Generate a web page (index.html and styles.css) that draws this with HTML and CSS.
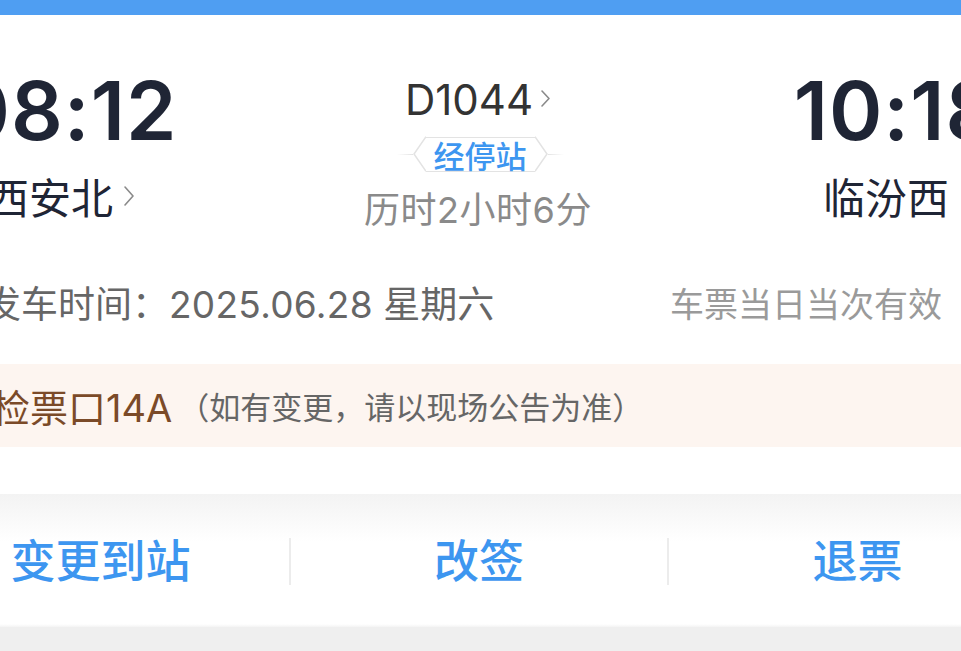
FILE: index.html
```html
<!DOCTYPE html>
<html lang="zh-CN">
<head>
<meta charset="utf-8">
<title>车票详情</title>
<link rel="stylesheet" href="styles.css">
</head>
<body>
<div class="topbar"></div>
<main class="card">
  <section class="route">
    <div class="end end-from">
      <div class="time">08:12</div>
      <div class="station">西安北<svg class="chev" width="12" height="22" viewBox="0 0 12 22"><polyline points="2,2 10,11 2,20" fill="none" stroke="#8a8a8a" stroke-width="1.6" stroke-linecap="round" stroke-linejoin="round"/></svg></div>
    </div>
    <div class="mid">
      <div class="train">D1044<svg class="chev" width="11" height="19" viewBox="0 0 11 19"><polyline points="2,2 9,9.5 2,17" fill="none" stroke="#8a8a8a" stroke-width="1.6" stroke-linecap="round" stroke-linejoin="round"/></svg></div>
      <div class="badge">
        <span class="badge-line left"></span>
        <svg class="badge-tip" width="13" height="36" viewBox="0 0 13 36"><polyline points="13,0.75 1,18 13,35.25" fill="#fff" stroke="#e3e3e3" stroke-width="1.5"/></svg>
        <span class="badge-text">经停站</span>
        <svg class="badge-tip" width="13" height="36" viewBox="0 0 13 36"><polyline points="0,0.75 12,18 0,35.25" fill="#fff" stroke="#e3e3e3" stroke-width="1.5"/></svg>
        <span class="badge-line right"></span>
      </div>
      <div class="duration">历时2小时6分</div>
    </div>
    <div class="end end-to">
      <div class="time">10:18</div>
      <div class="station">临汾西</div>
    </div>
  </section>

  <section class="info">
    <div class="depart">发车时间：<span class="num">2025.06.28</span> 星期六</div>
    <div class="valid">车票当日当次有效</div>
  </section>

  <section class="gate">
    <span class="gate-no">检票口14A</span><span class="gate-note">（如有变更，请以现场公告为准）</span>
  </section>

  <nav class="actions">
    <div class="action">变更到站</div>
    <div class="sep"></div>
    <div class="action">改签</div>
    <div class="sep"></div>
    <div class="action">退票</div>
  </nav>
</main>
<div class="footer"></div>
</body>
</html>
```

FILE: styles.css
```css
html, body {
  margin: 0;
  padding: 0;
  overflow: hidden;
  background: #ffffff;
}
body {
  width: 961px;
  height: 651px;
  font-family: Inter, "Noto Sans CJK SC", sans-serif;
  color: #1f2535;
}
.topbar {
  height: 15px;
  background: #4f9ef2;
}
.card {
  background: #fff;
}
.route {
  display: grid;
  grid-template-columns: 400px 436px 380px;
  margin-left: -140px;
  width: 1216px;
  align-items: start;
}
.end {
  display: flex;
  flex-direction: column;
  align-items: center;
}
.time {
  margin-top: 56px;
  font-size: 81px;
  line-height: 80px;
  font-weight: 600;
  letter-spacing: 1px;
  color: #1f2535;
}
.end-from .time {
  margin-left: 14px;
}
.end-to .time {
  margin-left: 20px;
}
.station {
  margin-top: 20px;
  font-size: 42px;
  line-height: 50px;
  color: #1f2535;
  display: flex;
  align-items: center;
  font-family: "Noto Sans CJK SC", sans-serif;
}
.end-from .station {
  margin-left: 2px;
}
.chev {
  margin-left: 10px;
}
.mid {
  display: flex;
  flex-direction: column;
  align-items: center;
}
.train {
  margin-top: 60px;
  font-size: 42px;
  line-height: 50px;
  color: #333;
  display: flex;
  align-items: center;
  margin-left: 0;
}
.train .chev {
  margin-left: 7px;
  margin-bottom: 4px;
}
.badge {
  margin-top: 11px;
  display: flex;
  align-items: center;
  height: 36px;
  margin-left: 4px;
}
.badge-line {
  width: 16px;
  height: 1px;
}
.badge-line.left {
  background: linear-gradient(to left, #e3e3e3, rgba(227,227,227,0));
}
.badge-line.right {
  background: linear-gradient(to right, #e3e3e3, rgba(227,227,227,0));
}
.badge-tip {
  display: block;
}
.badge-text {
  height: 33px;
  border-top: 1.5px solid #e3e3e3;
  border-bottom: 1.5px solid #e3e3e3;
  background: #fff;
  padding: 0 8px;
  font-family: "Noto Sans CJK SC", sans-serif;
  font-size: 31px;
  line-height: 33px;
  font-weight: 500;
  color: #3d96f0;
}
.duration {
  margin-top: 16px;
  font-size: 36px;
  line-height: 44px;
  color: #8a8a8a;
  letter-spacing: 0.5px;
}
.info {
  display: grid;
  grid-template-columns: 686px auto;
  margin-left: -16px;
  margin-top: 51px;
  line-height: 44px;
  white-space: nowrap;
}
.depart {
  color: #666;
  font-size: 37px;
}
.depart .num {
  letter-spacing: 0.3px;
}
.valid {
  color: #9a9a9a;
  font-size: 34px;
}
.gate {
  margin-top: 37px;
  height: 83px;
  background: #fdf5f0;
  display: flex;
  align-items: center;
  white-space: nowrap;
}
.gate-no {
  margin-left: -8px;
  font-size: 38px;
  color: #7b4a28;
}
.gate-note {
  margin-left: 6px;
  font-size: 31px;
  color: #666;
}
.actions {
  margin-top: 47px;
  display: grid;
  grid-template-columns: 377px 2px 376px 2px 377px;
  margin-left: -88px;
  width: 1134px;
  align-items: start;
  height: 133px;
  background: linear-gradient(to bottom, #f3f3f3 0px, #fafafa 28px, #ffffff 48px, #ffffff 130px, #f4f4f4 133px);
}
.action {
  margin-top: 38px;
  text-align: center;
  font-family: "Noto Sans CJK SC", sans-serif;
  font-size: 45px;
  font-weight: 500;
  color: #3d96f0;
  line-height: 54px;
}
.sep {
  height: 47px;
  background: #ececec;
  margin-top: 44px;
}
.footer {
  height: 30px;
  background: #efefef;
}
```
